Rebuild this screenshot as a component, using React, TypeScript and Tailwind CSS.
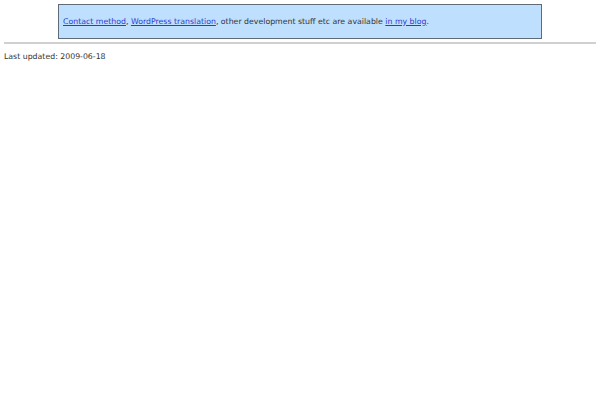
export default function App() {
  return (
    <div className="min-h-[400px] bg-white p-[4px] text-[7.8px] text-[#333] font-['DejaVu_Sans',sans-serif]">
      <div className="mx-auto w-[484px] h-[35px] flex items-center border border-[#5f6b78] bg-[#bfdffe] px-[4px]">
        <p>
          <a href="#" className="text-[#2d3bd0] underline">Contact method</a>,{' '}
          <a href="#" className="text-[#2d3bd0] underline">WordPress translation</a>, other development stuff etc are available{' '}
          <a href="#" className="text-[#2d3bd0] underline">in my blog</a>.
        </p>
      </div>
      <hr className="mt-[3px] border-0 h-[2px] bg-[#d0d0d0]" />
      <p className="mt-[7px]">Last updated: 2009-06-18</p>
    </div>
  )
}
